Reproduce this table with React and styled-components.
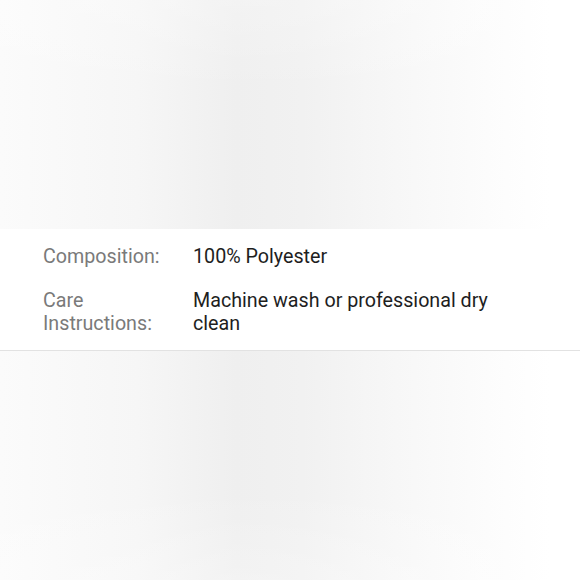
import React from "react";
import styled, { createGlobalStyle } from "styled-components";

const Global = createGlobalStyle`
  html, body { margin: 0; padding: 0; background: #ffffff; }
  body { font-family: Roboto, "Noto Sans", Arial, sans-serif; }
`;

const Page = styled.div`
  width: 580px;
  display: flex;
  flex-direction: column;
`;

const ProductImage = styled.div`
  width: 550px;
  height: ${(p) => p.$h}px;
  background:
    linear-gradient(${(p) => (p.$flip ? "180deg" : "0deg")}, rgba(255,255,255,0) 60%, rgba(255,255,255,0.25) 100%),
    linear-gradient(90deg, #fbfbfb 0%, #f6f6f6 25%, #efefef 43%, #f1f1f1 55%, #f7f7f7 72%, #fdfdfd 92%, #ffffff 100%);
`;

const Specs = styled.div`
  display: flex;
  flex-direction: column;
  gap: 21px;
  padding: 16px 43px 15px 43px;
  border-bottom: 1px solid #e2e2e2;
`;

const Row = styled.div`
  display: grid;
  grid-template-columns: 150px 1fr;
  font-size: 19.7px;
  line-height: 23px;
`;

const Label = styled.div`
  color: #7a7a7a;
  padding-right: 20px;
`;

const Value = styled.div`
  color: #1e1e1e;
  max-width: 320px;
`;

const specs = [
  { label: "Composition:", value: "100% Polyester" },
  { label: "Care Instructions:", value: "Machine wash or professional dry clean" },
];

export default function App() {
  return (
    <Page>
      <Global />
      <ProductImage $h={229} />
      <Specs>
        {specs.map((s) => (
          <Row key={s.label}>
            <Label>{s.label}</Label>
            <Value>{s.value}</Value>
          </Row>
        ))}
      </Specs>
      <ProductImage $h={229} $flip />
    </Page>
  );
}
